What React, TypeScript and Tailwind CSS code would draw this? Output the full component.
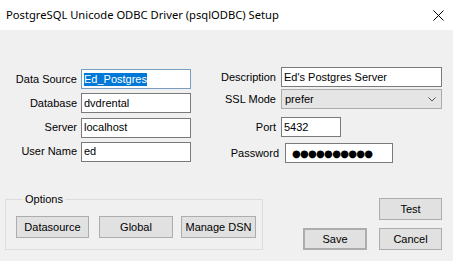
import React from "react";

const Field = ({ value, className = "" }: { value: string; className?: string }) => (
  <div className={`h-[20px] bg-white border border-[#7a7a7a] flex items-center pl-[2px] ${className}`}>
    {value}
  </div>
);

const Btn = ({ label, className = "" }: { label: string; className?: string }) => (
  <button className={`h-[22px] bg-[#e1e1e1] border border-[#adadad] flex items-center justify-center ${className}`}>
    {label}
  </button>
);

const App = () => {
  return (
    <div
      className="w-[453px] h-[261px] bg-[#f0f0f0] text-[11px] text-black leading-[13px] flex flex-col"
      style={{ fontFamily: '"Liberation Sans", Arial, sans-serif' }}
    >
      {/* Title bar */}
      <div className="h-[30px] bg-white flex items-center justify-between pl-[6px] pr-[8px]">
        <span className="text-[11.2px] leading-[16px] text-black" style={{ fontFamily: '"Noto Sans", sans-serif' }}>
          PostgreSQL Unicode ODBC Driver (psqlODBC) Setup
        </span>
        <svg width="11" height="11" viewBox="0 0 11 11" className="mr-[1px]">
          <path d="M0.5 0.5 L10.5 10.5 M10.5 0.5 L0.5 10.5" stroke="#000" strokeWidth="1" />
        </svg>
      </div>

      {/* Form */}
      <div className="h-[160px] flex items-start">
        {/* Left column */}
        <div className="mt-[39px] flex flex-col gap-[4.33px]">
          <div className="flex items-center">
            <span className="w-[77px] text-right">Data Source</span>
            <div className="ml-[4px] w-[110px] h-[20px] bg-white border border-[#7a9ebf] flex items-center pl-[2px]">
              <span className="bg-[#0078d7] text-white">Ed_Postgres</span>
            </div>
          </div>
          <div className="flex items-center">
            <span className="w-[77px] text-right">Database</span>
            <Field value="dvdrental" className="ml-[4px] w-[110px]" />
          </div>
          <div className="flex items-center">
            <span className="w-[77px] text-right">Server</span>
            <Field value="localhost" className="ml-[4px] w-[110px]" />
          </div>
          <div className="flex items-center">
            <span className="w-[77px] text-right">User Name</span>
            <Field value="ed" className="ml-[4px] w-[110px]" />
          </div>
        </div>

        {/* Right column */}
        <div className="mt-[37px] flex flex-col">
          <div className="flex items-center">
            <span className="w-[85px] text-right">Description</span>
            <Field value="Ed's Postgres Server" className="ml-[5px] w-[161px]" />
          </div>
          <div className="mt-[2px] flex items-center">
            <span className="w-[85px] text-right">SSL Mode</span>
            <div className="ml-[5px] w-[161px] h-[20px] bg-[#e5e5e5] border border-[#acacac] flex items-center justify-between pl-[3px] pr-[5px]">
              <span>prefer</span>
              <svg width="8" height="5" viewBox="0 0 8 5">
                <path d="M0.5 0.5 L4 4 L7.5 0.5" stroke="#555" strokeWidth="1" fill="none" />
              </svg>
            </div>
          </div>
          <div className="mt-[8px] flex items-center">
            <span className="w-[85px] text-right">Port</span>
            <Field value="5432" className="ml-[5px] w-[60px]" />
          </div>
          <div className="mt-[6px] flex items-center">
            <span className="w-[88px] text-right">Password</span>
            <div className="ml-[6px] w-[108px] h-[20px] bg-white border border-[#7a7a7a] flex items-center pl-[6px]">
              <span className="text-[10px] tracking-[-0.7px]" style={{ fontFamily: '"DejaVu Sans", sans-serif' }}>
                ●●●●●●●●●●
              </span>
            </div>
          </div>
        </div>
      </div>

      {/* Bottom */}
      <div className="flex items-start">
        <fieldset className="ml-[5px] mt-[3px] w-[258px] min-w-0 border border-[#dcdcdc] pl-[10px] pr-[6px] pb-[11px]">
          <legend className="ml-[7px] px-[2px] leading-[13px]">Options</legend>
          <div className="mt-[10px] flex">
            <Btn label="Datasource" className="w-[73px] h-[20px]" />
            <Btn label="Global" className="ml-[10px] w-[74px] h-[20px]" />
            <Btn label="Manage DSN" className="ml-[8px] w-[75px] h-[20px]" />
          </div>
        </fieldset>
        <div className="ml-[40px] mt-[8px] w-[139px] flex flex-col items-end">
          <Btn label="Test" className="w-[63px]" />
          <div className="mt-[8px] flex">
            <Btn label="Save" className="w-[64px] border-2 border-[#0078d7]" />
            <Btn label="Cancel" className="ml-[12px] w-[63px]" />
          </div>
        </div>
      </div>
    </div>
  );
};

export default App;
